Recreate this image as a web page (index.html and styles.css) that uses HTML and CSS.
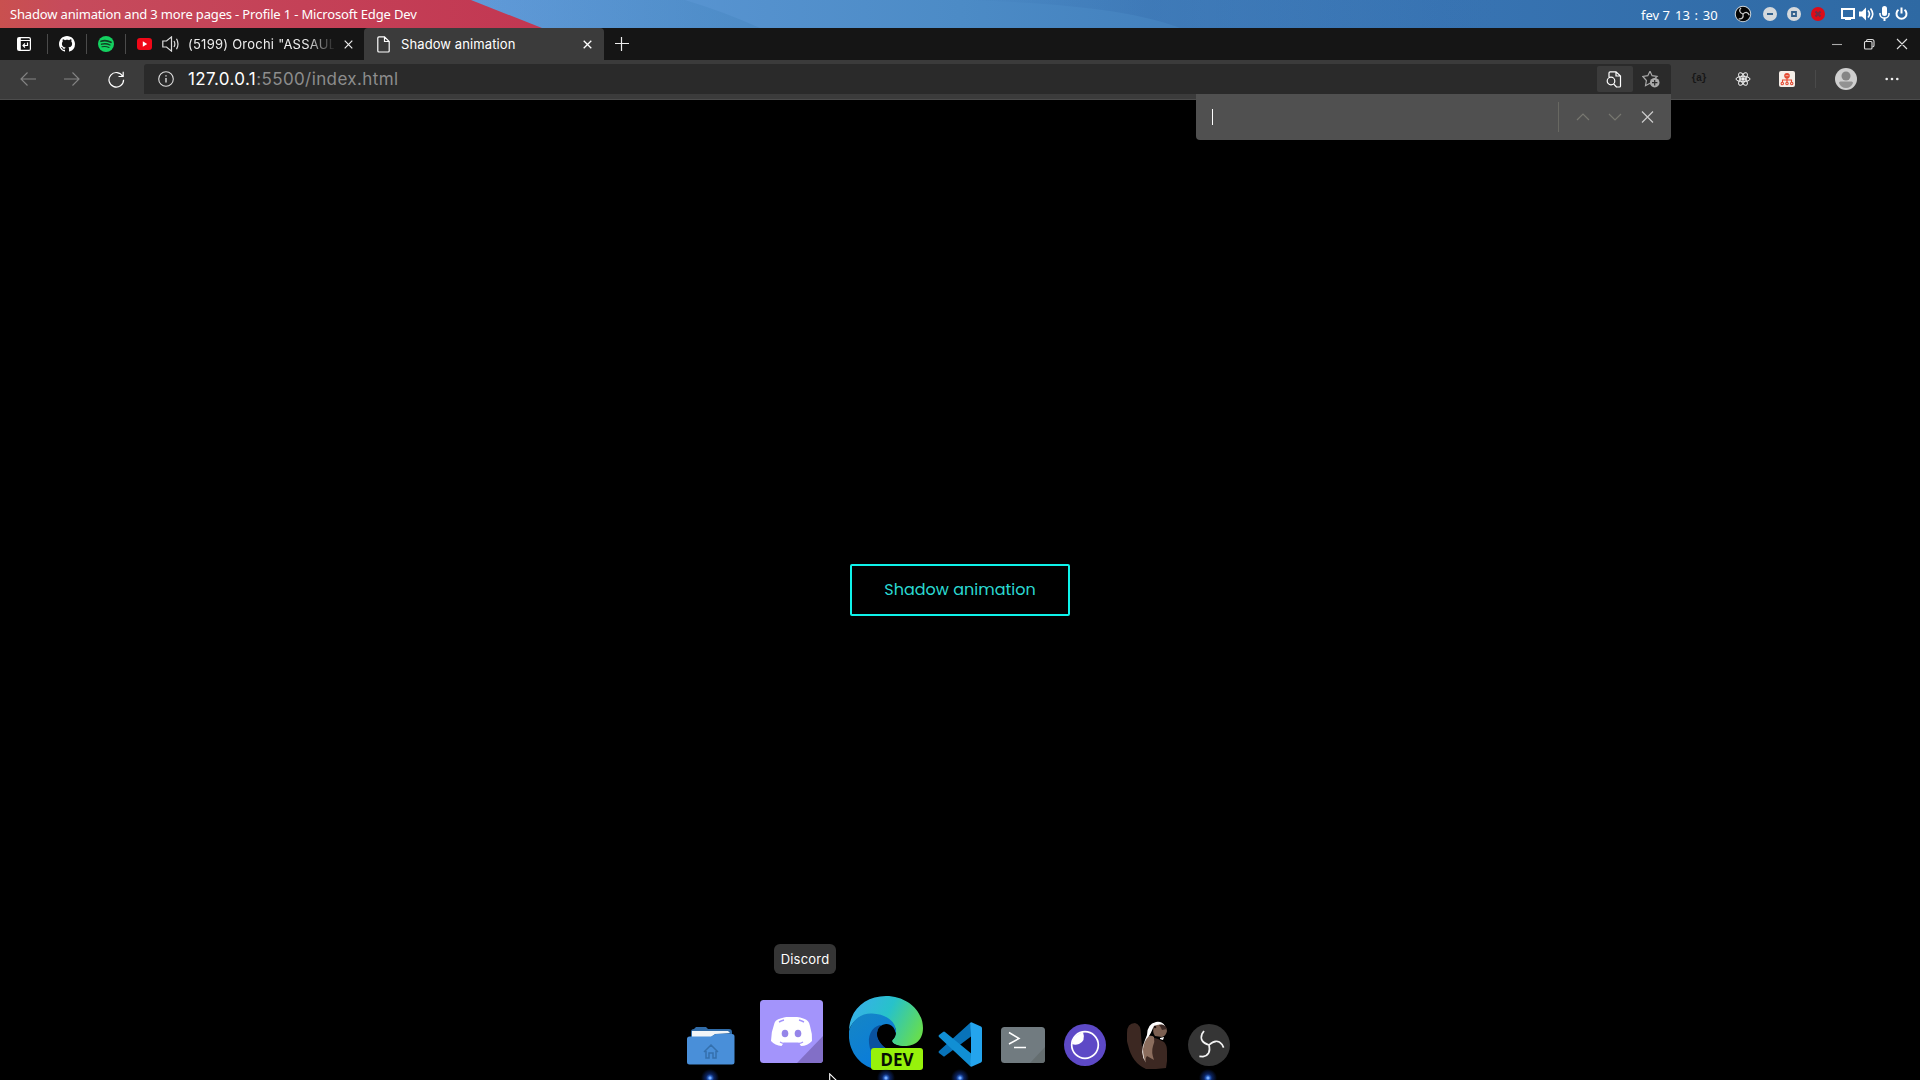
FILE: index.html
```html
<!DOCTYPE html>
<html lang="en">
<head>
<meta charset="utf-8">
<title>Shadow animation</title>
<link rel="stylesheet" href="styles.css">
</head>
<body>
<div class="desktop">
  <header class="panel">
    <svg class="wallpaper" width="1920" height="28" viewBox="0 0 1920 28">
      <defs>
        <linearGradient id="sky"><stop offset="0.25" stop-color="#609ad8"/><stop offset="0.5" stop-color="#4c8bc6"/><stop offset="0.75" stop-color="#3874b3"/><stop offset="1" stop-color="#2e69a3"/></linearGradient>
        <linearGradient id="rose"><stop offset="0" stop-color="#c9504f"/><stop offset="0.12" stop-color="#c64b5c"/><stop offset="1" stop-color="#c23752"/></linearGradient>
        <linearGradient id="wave"><stop offset="0" stop-color="#4b8cc8" stop-opacity="0"/><stop offset="1" stop-color="#4383bd"/></linearGradient>
        <linearGradient id="crest"><stop offset="0" stop-color="#3167a8" stop-opacity="0"/><stop offset=".35" stop-color="#3167a8" stop-opacity=".3"/><stop offset="1" stop-color="#3167a8" stop-opacity="0"/></linearGradient>
      </defs>
      <rect width="1920" height="28" fill="url(#sky)"/>
      <path d="M470 0H685Q725 12 760 28H540Z" fill="url(#wave)" opacity=".45"/>
      <path d="M960 0Q1120 4 1180 28H1500V0Z" fill="url(#crest)"/>
      <path d="M0 0H471L542 28H0Z" fill="url(#rose)"/>
    </svg>
    <span class="window-title">Shadow animation and 3 more pages - Profile 1 - Microsoft Edge Dev</span>
    <span class="date">fev 7</span><span class="time">13 : 30</span>
    <div class="tray">
      <svg class="tray-obs" width="18" height="18" viewBox="-22 -22 44 44"><circle r="19" fill="#050505" stroke="#c9d3da" stroke-width="2.5"/><g fill="none" stroke="#ccc" stroke-width="3"><path d="M0 0C-9-3-10-9-5-15"/><path d="M0 0C-9-3-10-9-5-15" transform="rotate(120)"/><path d="M0 0C-9-3-10-9-5-15" transform="rotate(240)"/></g></svg>
      <svg class="tray-win" width="14" height="14" viewBox="0 0 14 14"><circle cx="7" cy="7" r="7" fill="#d5d9dc"/><path d="M4 7h6" stroke="#34628d" stroke-width="2"/></svg>
      <svg class="tray-win" width="14" height="14" viewBox="0 0 14 14"><circle cx="7" cy="7" r="7" fill="#d5d9dc"/><path d="M5 5h4v4H5z" fill="none" stroke="#34628d" stroke-width="1.8"/></svg>
      <svg class="tray-win" width="14" height="14" viewBox="0 0 14 14"><circle cx="7" cy="7" r="7" fill="#dc0c18"/><path d="M4.500 4.500l5 5M9.500 4.500l-5 5" stroke="#6b3048" stroke-width="2"/></svg>
      <svg class="tray-status" width="68" height="16" viewBox="0 0 68 16"><g fill="none" stroke="#fff" stroke-width="2"><path d="M2 3h12v9H2z"/><path d="M28 4.500q3 3.500 0 7M30.500 2.500q4.500 5.500 0 11" stroke-width="1.600"/><path d="M40 7v1.500q.5 3.500 4.500 3.500t4.500-3.500V7" stroke-width="1.500"/><path d="M58.500 3.800a5 5 0 1 0 6 0M61.500 1.500v6"/></g><path d="M5 12h6v2H5zM19 5.500h3l4-4v13l-4-4h-3zM43.500 12h2v3h-2z" fill="#fff"/><rect x="42" y="0" width="5" height="10" rx="2.500" fill="#fff"/></svg>
    </div>
  </header>

  <nav class="tabstrip">
    <svg class="tab-menu" width="14" height="14" viewBox="0 0 14 14"><rect x=".6" y=".6" width="12.800" height="12.800" rx="1.500" fill="none" stroke="#fff" stroke-width="1.200"/><path d="M1 1h2.800v12H1z" fill="#fff"/><path d="M3 3.500h10" stroke="#fff"/><path d="M10.500 5.500v3H6M8 6.500l-2 2 2 2" fill="none" stroke="#fff" stroke-width="1.200"/></svg>
    <i class="rule"></i>
    <svg class="pin" width="16" height="16" viewBox="0 0 16 16" fill="#fff"><path d="M8 0C3.580 0 0 3.580 0 8c0 3.540 2.290 6.530 5.470 7.590.4.070.55-.17.55-.38 0-.19-.01-.82-.01-1.490-2.010.37-2.530-.49-2.690-.94-.09-.23-.48-.94-.82-1.130-.28-.15-.68-.52-.01-.53.63-.01 1.080.58 1.230.82.72 1.210 1.870.87 2.330.66.070-.52.28-.87.51-1.070-1.780-.2-3.640-.89-3.640-3.950 0-.87.31-1.590.82-2.150-.08-.2-.36-1.020.08-2.120 0 0 .67-.21 2.200.82.64-.18 1.320-.27 2-.27s1.360.09 2 .27c1.530-1.040 2.200-.82 2.200-.82.44 1.100.16 1.920.08 2.120.51.56.82 1.270.82 2.150 0 3.070-1.870 3.750-3.650 3.950.29.25.54.73.54 1.480 0 1.070-.01 1.930-.01 2.200 0 .21.15.46.55.38A8 8 0 0 0 16 8c0-4.420-3.580-8-8-8z"/></svg>
    <i class="rule"></i>
    <svg class="pin" width="16" height="16" viewBox="0 0 16 16"><circle cx="8" cy="8" r="8" fill="#14d160"/><g fill="none" stroke="#123b22" stroke-linecap="round"><path d="M3 5.300q5-1.600 10 1" stroke-width="1.700"/><path d="M3.500 8.200q4.500-1.300 8.500.8" stroke-width="1.400"/><path d="M4 10.800q3.800-.9 7 .7" stroke-width="1.100"/></g></svg>
    <i class="rule"></i>
    <div class="tab">
      <svg width="16" height="12" viewBox="0 0 16 12"><rect width="15" height="12" rx="3" fill="#f00818"/><path d="M5.800 3.300v5.400l4.400-2.700z" fill="#fff"/></svg>
      <svg class="speaker" width="18" height="16" viewBox="0 0 18 16" fill="none" stroke="#ddd" stroke-width="1.200"><path d="M.8 5h3.700L9.500.9v14.200L4.500 11H.8zM12 5q1.700 3 0 6M14.500 2.800q3 5.200 0 10.400"/></svg>
      <span class="tab-text fade">(5199) Orochi "ASSAUL</span>
      <svg class="close" width="9" height="9" viewBox="0 0 9 9" stroke="#eee" stroke-width="1.200"><path d="M.7.7l7.600 7.600M8.300.7L.7 8.300"/></svg>
    </div>
    <div class="tab active">
      <svg width="13" height="17" viewBox="0 0 13 17" fill="none" stroke="#fff" stroke-width="1.200"><path d="M2 .8h5.500L12.200 5.500V15q0 1-1 1H2Q.8 16 .8 15V2Q.8.8 2 .8zM7.500.8v4.700h4.700"/></svg>
      <span class="tab-text page">Shadow animation</span>
      <svg class="close" width="9" height="9" viewBox="0 0 9 9" stroke="#fff" stroke-width="1.300"><path d="M.7.7l7.600 7.600M8.300.7L.7 8.300"/></svg>
    </div>
    <svg class="new-tab" width="14" height="14" viewBox="0 0 14 14" stroke="#eee" stroke-width="1.200"><path d="M0 6.500h14M6.500 0v14"/></svg>
    <svg class="controls" width="76" height="12" viewBox="0 0 76 12" fill="none" stroke="#ddd" stroke-width="1.100"><path d="M0 6.500h10" stroke="#aaa"/><rect x="32.500" y="3.500" width="7.500" height="7.500" rx="1"/><path d="M34.500 3.500v-.5q0-1.500 1.500-1.500h4q2 0 2 2v4q0 1-1.500 1.500M65 1l10 10M75 1L65 11"/></svg>
  </nav>

  <div class="toolbar">
    <svg class="nav back" width="16" height="14" viewBox="0 0 16 14"><path d="M16 7H1M7.500.5L1 7l6.500 6.500"/></svg>
    <svg class="nav" width="16" height="14" viewBox="0 0 16 14"><path d="M0 7h15M8.500.5L15 7l-6.500 6.500"/></svg>
    <svg class="reload" width="17" height="17" viewBox="0 0 17 17" fill="none" stroke="#fff" stroke-width="1.200"><path d="M14.700 5.300A7.300 7.300 0 1 0 15.600 8.800M15.200.8v4.700h-4.700"/></svg>
    <div class="address">
      <svg class="info" width="16" height="16" viewBox="0 0 16 16" fill="none" stroke="#ddd" stroke-width="1.100"><circle cx="8" cy="8" r="7.300"/><path d="M8 7v4.500M8 4.300v1.300" stroke-width="1.400"/></svg>
      <span class="url"><b>127.0.0.1</b>:5500/index.html</span>
      <span class="find-toggle"><svg width="16" height="17" viewBox="0 0 16 17" fill="none" stroke="#fff" stroke-width="1.200"><path d="M3 6V2q0-1.200 1.200-1.200H10L14.500 5v10q0 1-1 1H10M10 .8V5h4.500"/><circle cx="5" cy="10" r="3.800"/><path d="M7.600 12.800L10.500 16"/></svg></span>
      <svg class="star" width="18" height="18" viewBox="0 0 18 18"><path d="M8 1.200l2.100 4.500 5 .7-3.700 3.500.4 1.500M8 13.300l-4.500 2.400.9-5.200L.8 6.400l5-.7L8 1.200" fill="none" stroke="#aaa" stroke-width="1.200"/><circle cx="12.700" cy="12.700" r="4.800" fill="#aaa"/><path d="M10 12.700h5.400M12.700 10v5.400" stroke="#2b2b2b" stroke-width="1.200"/></svg>
    </div>
    <span class="ext-json">{a}</span>
    <svg class="react" width="16" height="16" viewBox="-8 -8 16 16" fill="none" stroke="#eee" stroke-width="1"><ellipse rx="7" ry="2.700"/><ellipse rx="7" ry="2.700" transform="rotate(60)"/><ellipse rx="7" ry="2.700" transform="rotate(120)"/><circle r="1.300" fill="#eee"/></svg>
    <svg class="ext-tree" width="16" height="16" viewBox="0 0 16 16"><rect width="16" height="16" rx="2" fill="#f5eee8"/><g fill="none" stroke="#e4482f" stroke-width="1.100"><path d="M8 7v4M3.500 11V9h9v2"/><circle cx="3.300" cy="12.500" r="1.200"/><circle cx="8" cy="12.500" r="1.200"/><circle cx="12.700" cy="12.500" r="1.200"/></g><circle cx="8" cy="4.700" r="2.800" fill="#e4482f"/><path d="M6.500 4.700h3" stroke="#f3b5a5"/></svg>
    <i class="rule tool-rule"></i>
    <svg class="avatar" width="22" height="22" viewBox="0 0 22 22"><circle cx="11" cy="11" r="11" fill="#cfcfcf"/><circle cx="11" cy="8" r="4.500" fill="#858585"/><path d="M4 15q0-1.500 1.500-1.500h11q1.500 0 1.500 1.500-2 5-7 5t-7-5" fill="#929292"/></svg>
    <svg class="dots" width="14" height="4" viewBox="0 0 14 4" fill="#eee"><circle cx="1.700" cy="2" r="1.300"/><circle cx="7" cy="2" r="1.300"/><circle cx="12.300" cy="2" r="1.300"/></svg>
  </div>

  <main class="page-body">
    <div class="find-bar">
      <i class="caret"></i><i class="find-rule"></i>
      <svg width="80" height="14" viewBox="0 0 80 14" fill="none" stroke="#777770" stroke-width="1.200"><path d="M1 10l6-6 6 6M33 4l6 6 6-6"/><path d="M66 1.500l11 11M77 1.500l-11 11" stroke="#ccc"/></svg>
    </div>
    <button class="shadow-button">Shadow animation</button>
  </main>

  <footer class="dock">
    <div class="app files running">
      <svg width="48" height="38" viewBox="0 0 48 38"><path d="M4 5q0-3 3-3l2-2h10l2 2h21q3 0 3 3v10H4z" fill="#316ca8"/><path d="M5 4h36l2 2-15 1-4 3H5z" fill="#f1f5f8"/><path d="M0 12q0-2.500 2.500-2.500H24L29 7h16q2.500 0 2.500 2.500V35q0 2.500-2.500 2.500H2.500Q0 37.500 0 35z" fill="#498fd9"/><path d="M17 25l7-7 7 7M19 24v7h3v-5h4v5h3v-7" fill="none" stroke="#3470ad" stroke-width="1.500"/></svg>
    </div>
    <div class="app discord">
      <span class="tooltip">Discord</span>
      <svg width="63" height="63" viewBox="0 0 63 63"><rect width="63" height="63" rx="3.500" fill="#a394fb"/><path d="M63 36v23q0 4-4 4H37z" fill="#826fc7"/><path d="M20.500 18.500q5-2 6.500-1.500h9q3-.5 8 1.800 5 1.200 6 7.200 2.500 8 2 15-4.500 5-11 5l-2.500-3.500H24L21.500 46Q15 45.500 11 41q0-9 3.500-18 1-3.500 6-4.500z" fill="#fff"/><path d="M19 22q3-1.500 5-2M44 22q-3-1.500-5-2M20 42q2 1.200 4 1.500M43 42q-2 1.200-4 1.500" fill="none" stroke="#a394fb" stroke-width="1.400"/><ellipse cx="25" cy="33.500" rx="3.300" ry="3.800" fill="#9585e9"/><ellipse cx="38" cy="33.500" rx="3.300" ry="3.800" fill="#9585e9"/></svg>
    </div>
    <div class="app edge running">
      <svg width="75" height="75" viewBox="0 0 75 75">
        <defs><linearGradient id="edgeTop" x1="0" y1=".3" x2="1" y2=".65"><stop offset="0" stop-color="#38afea"/><stop offset=".48" stop-color="#27c2ca"/><stop offset="1" stop-color="#66dd50"/></linearGradient><linearGradient id="edgeLow" x1="0" y1="0" x2=".6" y2="1"><stop offset="0" stop-color="#1686c4"/><stop offset="1" stop-color="#087bdd"/></linearGradient></defs>
        <path d="M0 34C1 13 17 0 37 0c21 0 37 15 37 32 0 13-9 18-18 18-8 0-14-3-13-6 3-2 4-5 4-8 0-9-10-16-21-17C13 18 4 24 0 34z" fill="url(#edgeTop)"/>
        <path d="M0 35C4 22 14 17 23 17.500c14 .5 24 8 24 18l-1 2C43 26 33 26 29 35c-4 13 3 24 12 28l3 10C16 79-2 58 0 35z" fill="url(#edgeLow)"/>
        <path d="M33 29c-8 0-14 8-13 18 1 12 9 21 19 24h20V52H37c-6-4-9-10-9-16 1-3 3-6 5-7z" fill="#0a529f"/>
        <path d="M37.500 28a9.300 9.300 0 0 1 6 16c-2 3 4 6 12 6.500V53H39c-7-4-11-10-11-16a9.300 9.300 0 0 1 9.500-9z" fill="#000"/>
        <rect x="22" y="52" width="52" height="22" rx="3" fill="#97f20b"/><text x="48" y="69.500" class="dev-label" text-anchor="middle" textLength="33" lengthAdjust="spacingAndGlyphs">DEV</text>
      </svg>
    </div>
    <div class="app code running">
      <svg width="45" height="45" viewBox="0 0 45 45"><path d="M1 29l31-28 3 12L7 34q-1 1-2 0l-4-3q-1-1 0-2z" fill="#0873b9"/><path d="M1 15q-1-1 0-2l4-3q1-1 2 0l28 23-3 11z" fill="#118fd4"/><path d="M32 1q1-1 2-.5l9 4q1 .5 1 2v32q0 1.500-1 2l-9 4q-1 .5-2-.500l1-11V12z" fill="#24a4ed"/></svg>
    </div>
    <div class="app terminal">
      <svg width="44" height="36" viewBox="0 0 44 36"><rect width="44" height="36" rx="3.500" fill="#717b80"/><path d="M44 20v12.500q0 3.500-3.500 3.500H29z" fill="#656e70"/><path d="M8 5.500l10 6-10 5.500M13 20.500h12" fill="none" stroke="#fff" stroke-width="1.500"/></svg>
    </div>
    <div class="app insomnia">
      <svg width="42" height="42" viewBox="0 0 42 42"><circle cx="21" cy="21" r="21" fill="#5d49c6"/><circle cx="21" cy="21" r="13.300" fill="none" stroke="#fff" stroke-width="1.700"/><path d="M19 8q3 9-4 12-4 1.500-7 0 1-9 11-12z" fill="#fff"/></svg>
    </div>
    <div class="app beaver">
      <svg width="42" height="49" viewBox="0 0 42 49"><path d="M0 12Q0 2 8 2q6 1 6 12l1 12 6-11 10 3 6 3q3 3 3 9v10l-1 7-10 1H19Q5 42 1 24-1 18 0 12z" fill="#3c2822"/><path d="M21 15q4-1 6 1 1 5-1 9-2 6 1 14l-7-4q-2 2-1 6Q11 31 21 15z" fill="#8b6d5d"/><path d="M19 42q-7-10-1-23l2-5q0-11 9-13 6-1 9 4l-3 1q-6-3-9 1-2 5-4 8-5 5-6 13 0 8 3 14z" fill="#fff"/><path d="M27 5q6-3 11 0 2 2 2 5-1 5-5 6l-7-1q-3-4-1-10z" fill="#7b5f51"/><path d="M32 4q5-2 8 4l-5 1q-1-3-3-5z" fill="#3b2925"/><circle cx="28" cy="6" r="1.300" fill="#20120e"/><path d="M33 17l4-1-1 3-3-1z" fill="#fff"/></svg>
    </div>
    <div class="app obs running">
      <svg width="42" height="42" viewBox="-21 -21 42 42"><circle r="21" fill="#353535"/><g fill="none" stroke="#f3f3f3" stroke-width="1.700"><path d="M0 0Q-10-3-7-11l2-3"/><path d="M0 0Q-10-3-7-11l2-3" transform="rotate(120)"/><path d="M0 0Q-10-3-7-11l2-3" transform="rotate(240)"/></g></svg>
    </div>
  </footer>
  <svg class="cursor" width="9" height="8" viewBox="0 0 9 8"><path d="M.7 8V.9L8 8" fill="#000" stroke="#fff" stroke-width="1.100"/></svg>
</div>
</body>
</html>
```
FILE: styles.css
```css
* { box-sizing: border-box; }
body { margin: 0; background: #000; font-family: Inter, "Noto Sans", sans-serif; }
svg { display: block; flex: none; }
.desktop { position: relative; width: 1920px; height: 1080px; display: flex; flex-direction: column; overflow: hidden; }

.panel { position: relative; height: 28px; display: flex; align-items: center; padding: 0 11px 0 10px; color: #fff; font: 13px/28px "Noto Sans", sans-serif; }
.wallpaper { position: absolute; inset: 0; }
.window-title, .date, .time, .tray { position: relative; white-space: nowrap; }
.window-title { width: 1631px; letter-spacing: -.165px; }
.date { width: 34px; padding-top: 2px; }
.time { width: 59px; padding-top: 2px; word-spacing: 1.3px; }
.tray { display: flex; align-items: center; }
.tray-win { margin-left: 10px; }
.tray-obs + .tray-win { margin-left: 11px; }
.tray-status { margin-left: 15px; }

.tabstrip { height: 32px; display: flex; align-items: center; background: #151515; }
.tab-menu { margin: 0 16px 0 17px; }
.rule { width: 1px; height: 20px; background: #4b4b4b; flex: none; }
.pin { margin: 0 11px; }
.tab { width: 238px; height: 32px; display: flex; align-items: center; padding: 0 11px; }
.speaker { margin-left: 9px; }
.tab-text { font-size: 13px; letter-spacing: .1px; color: #eee; white-space: nowrap; line-height: 20px; }
.fade { width: 146px; margin-left: 8px; letter-spacing: .24px; mask-image: linear-gradient(90deg, #000 118px, transparent 148px); }
.close { margin-left: auto; }
.active { width: 240px; background: #3b3b3b; border-radius: 4px 4px 0 0; padding: 0 12px 0 13px; }
.page { margin-left: 11px; color: #fff; }
.new-tab { margin-left: 11px; }
.controls { margin-left: auto; margin-right: 12px; }

.toolbar { height: 40px; display: flex; align-items: center; padding-bottom: 1px; background: #3b3b3b; border-bottom: 1px solid #4c4c4c; }
.nav { margin-left: 28px; fill: none; stroke: #858585; stroke-width: 1.1; }
.back { margin-left: 20px; }
.reload { margin-left: 28px; }
.address { width: 1527px; height: 30px; margin-left: 19px; display: flex; align-items: center; background: #2a2a2a; border-radius: 3px 3px 0 0; }
.info { margin-left: 14px; }
.url { margin-left: 14px; font-size: 17px; line-height: 24px; letter-spacing: .39px; color: #8d8d8d; }
.url b { font-weight: 400; color: #fff; }
.find-toggle { width: 36px; height: 26px; margin-left: auto; display: flex; align-items: center; justify-content: center; background: #3b3b3b; border-radius: 2px; padding-right: 2px; }
.star { margin: 0 11px 0 9px; }
.ext-json { width: 14px; margin-left: 20px; margin-right: 1px; color: #171717; font: bold 10px/16px "Liberation Mono", monospace; letter-spacing: -1px; }
.react { margin-left: 29px; }
.ext-tree { margin-left: 28px; }
.tool-rule { margin-left: 20px; background: #4a4a4a; height: 18px; }
.avatar { margin-left: 19px; }
.dots { margin-left: 28px; }

.page-body { height: 890px; display: flex; flex-direction: column; align-items: center; position: relative; }
.find-bar { position: absolute; left: 1196px; top: -6px; width: 475px; height: 46px; display: flex; align-items: center; padding-left: 16px; background: #505050; border-radius: 0 0 4px 4px; }
.caret { width: 1px; height: 16px; background: #fff; }
.find-rule { width: 1px; height: 30px; margin: 0 17px 0 345px; background: #686862; }
.shadow-button { width: 220px; height: 52px; margin-top: 464px; padding: 0; border: 2px solid #0ff2ea; border-radius: 2px; background: #000; color: #2bd9d2; font: 16px/48px Poppins, Lato, sans-serif; white-space: nowrap; }

.dock { height: 90px; display: flex; align-items: flex-end; padding-left: 687px; }
.app { position: relative; }
.running::after { content: ""; position: absolute; width: 20px; height: 20px; background: radial-gradient(circle, #79adff 0 1px, #2b62c4 2px, #0b2360 4px, transparent 9px); left: calc(50% - 11px); }
.files { margin-bottom: 15px; }
.files::after { top: 41px; }
.discord { margin: 0 0 17px 25px; }
.edge { margin: 0 0 9px 26px; }
.edge::after { top: 72px; }
.code { margin: 0 0 13px 14px; }
.code::after { top: 46px; }
.terminal { margin: 0 0 17px 18px; }
.insomnia { margin: 0 0 14px 19px; }
.beaver { margin: 0 0 10px 21px; }
.obs { margin: 0 0 14px 19px; }
.obs::after { top: 44px; }
.dev-label { font: bold 17.5px "Noto Sans", sans-serif; fill: #071003; }
.tooltip { position: absolute; left: 14px; top: -56px; width: 62px; height: 30px; border-radius: 6px; background: #353535; color: #fff; font-size: 13px; line-height: 31px; text-align: center; letter-spacing: .2px; }
.cursor { position: absolute; left: 829px; top: 1073px; }
```
